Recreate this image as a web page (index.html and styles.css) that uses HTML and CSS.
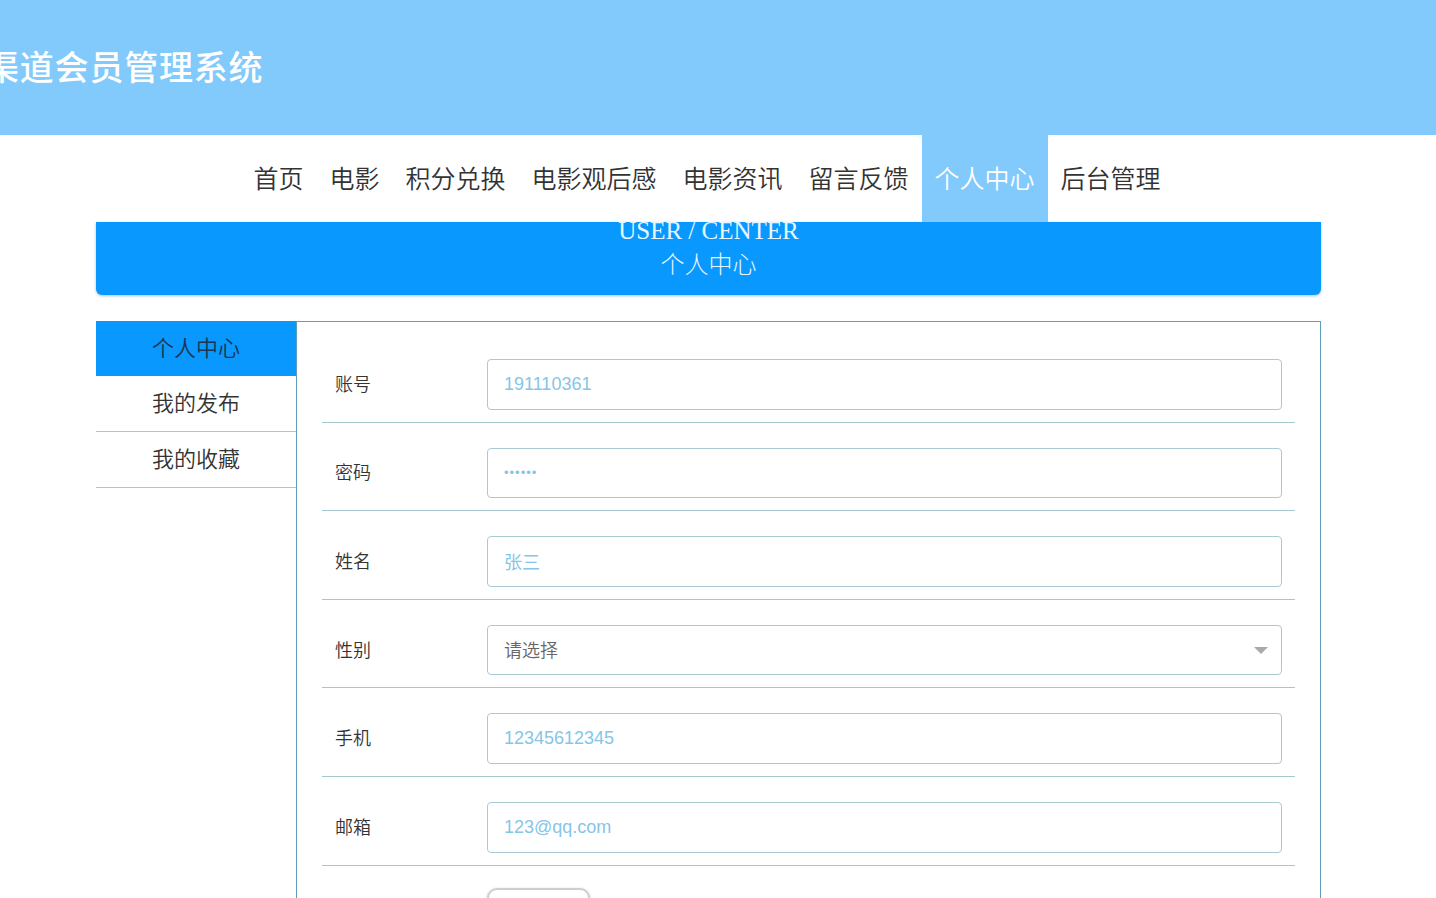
FILE: index.html
```html
<!DOCTYPE html>
<html lang="zh-CN">
<head>
<meta charset="utf-8">
<title>渠道会员管理系统</title>
<link rel="stylesheet" href="styles.css">
</head>
<body>
<header class="topbar">
  <h1 class="site-title">渠道会员管理系统</h1>
</header>
<nav class="mainnav">
  <a class="nav-item">首页</a>
  <a class="nav-item">电影</a>
  <a class="nav-item">积分兑换</a>
  <a class="nav-item">电影观后感</a>
  <a class="nav-item">电影资讯</a>
  <a class="nav-item">留言反馈</a>
  <a class="nav-item active">个人中心</a>
  <a class="nav-item">后台管理</a>
</nav>
<main class="page">
  <section class="banner">
    <div class="banner-en">USER / CENTER</div>
    <div class="banner-cn">个人中心</div>
  </section>
  <div class="layout">
    <aside class="sidebar">
      <a class="side-item active">个人中心</a>
      <a class="side-item">我的发布</a>
      <a class="side-item">我的收藏</a>
    </aside>
    <section class="panel">
      <form class="form">
        <div class="row">
          <label class="label">账号</label>
          <div class="field"><input class="input" type="text" value="191110361"></div>
        </div>
        <div class="row">
          <label class="label">密码</label>
          <div class="field"><input class="input pwd" type="password" value="123456"></div>
        </div>
        <div class="row">
          <label class="label">姓名</label>
          <div class="field"><input class="input" type="text" value="张三"></div>
        </div>
        <div class="row">
          <label class="label">性别</label>
          <div class="field select">
            <span class="placeholder">请选择</span>
            <span class="caret"></span>
          </div>
        </div>
        <div class="row">
          <label class="label">手机</label>
          <div class="field"><input class="input" type="text" value="12345612345"></div>
        </div>
        <div class="row">
          <label class="label">邮箱</label>
          <div class="field"><input class="input" type="text" value="123@qq.com"></div>
        </div>
        <div class="row last">
          <label class="label"></label>
          <div class="field-btn"><button class="btn" type="button">上传</button></div>
        </div>
      </form>
    </section>
  </div>
</main>
</body>
</html>
```
FILE: styles.css
```css
html {
  scrollbar-width: none;
}
body {
  margin: 0;
  background: #ffffff;
  font-family: "Noto Sans CJK SC", "Liberation Sans", sans-serif;
  color: #333;
}
.topbar {
  height: 135px;
  background: #82c9fc;
  display: flex;
  align-items: center;
  overflow: hidden;
}
.site-title {
  margin: -4px 0 0 -15px;
  font-size: 34px;
  font-weight: 500;
  color: #ffffff;
  letter-spacing: 0.8px;
  white-space: nowrap;
}
.mainnav {
  height: 87px;
  display: flex;
  justify-content: center;
  padding-right: 22px;
}
.nav-item {
  display: block;
  padding: 0 13px;
  line-height: 85px;
  font-size: 25px;
  font-weight: 350;
  color: #333;
  white-space: nowrap;
}
.nav-item.active {
  background: #82c9fc;
  color: #ffffff;
}
.page {
  margin-left: 96px;
  width: 1225px;
}
.banner {
  display: flow-root;
  height: 73px;
  background: #0898fe;
  border-radius: 0 0 6px 6px;
  box-shadow: 0 1px 3px rgba(0, 80, 160, 0.35);
  text-align: center;
  color: #e6f6ff;
  font-family: "Liberation Serif", "Noto Sans CJK SC", serif;
}
.banner-en {
  margin-top: -8px;
  font-size: 25px;
  line-height: 34px;
}
.banner-cn {
  font-size: 24px;
  line-height: 34px;
  font-weight: 300;
}
.layout {
  margin-top: 26px;
  display: flex;
  align-items: flex-start;
}
.sidebar {
  width: 200px;
  flex: none;
}
.side-item {
  display: block;
  height: 55px;
  line-height: 50px;
  border-bottom: 1px solid #a9c8d6;
  text-align: center;
  font-size: 22px;
  font-weight: 350;
  color: #333;
}
.side-item.active {
  background: #0898fe;
  border-bottom-color: #0898fe;
  color: #1d3552;
  height: 54px;
  line-height: 50px;
}
.panel {
  flex: 1;
  border: 1px solid #5d9fb8;
  border-bottom: none;
  min-height: 700px;
  padding: 12px 25px 0 25px;
}
.row {
  display: flex;
  align-items: center;
  padding: 25px 13px 12px 13px;
  border-bottom: 1px solid #a6c6cf;
}
.row.last {
  border-bottom: none;
  padding-top: 22px;
}
.label {
  width: 152px;
  flex: none;
  font-size: 18px;
  font-weight: 350;
  color: #333;
  margin-bottom: 3px;
}
.field {
  flex: 1;
  height: 50.6px;
  border: 1px solid #a9c9d3;
  border-radius: 4px;
  box-sizing: border-box;
  display: flex;
  align-items: center;
  position: relative;
}
.input {
  width: 100%;
  height: 100%;
  border: none;
  outline: none;
  background: transparent;
  padding: 0 16px;
  box-sizing: border-box;
  font-size: 18px;
  font-family: "Liberation Sans", "Noto Sans CJK SC", sans-serif;
  color: #86c5e8;
}
.input.pwd {
  font-size: 13px;
  letter-spacing: 1px;
}
.select .placeholder {
  padding-left: 16px;
  padding-bottom: 2px;
  font-size: 18px;
  font-weight: 350;
  color: #666;
}
.caret {
  position: absolute;
  right: 13px;
  top: 21px;
  width: 0;
  height: 0;
  border-left: 7px solid transparent;
  border-right: 7px solid transparent;
  border-top: 7px solid #aaa;
}
.field-btn {
  flex: 1;
}
.btn {
  width: 103px;
  height: 46px;
  border: 2px solid #cfcfcf;
  border-radius: 10px;
  background: #fff;
  box-shadow: 0 1px 3px rgba(0, 0, 0, 0.25);
  font-size: 16px;
  color: #333;
}
```
